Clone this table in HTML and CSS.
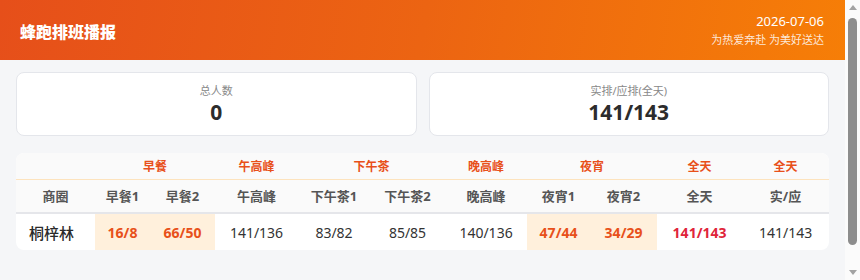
FILE: index.html
```html
<!DOCTYPE html>
<html lang="zh-CN">
<head>
<meta charset="utf-8">
<title>蜂跑排班播报</title>
<link rel="stylesheet" href="styles.css">
</head>
<body>
<div class="page">
<header class="topbar">
  <h1 class="title">蜂跑排班播报</h1>
  <div class="meta">
    <div class="date">2026-07-06</div>
    <div class="slogan">为热爱奔赴 为美好送达</div>
  </div>
</header>
<main class="main">
  <section class="stats">
    <div class="stat">
      <div class="stat-label">总人数</div>
      <div class="stat-value">0</div>
    </div>
    <div class="stat">
      <div class="stat-label">实排/应排(全天)</div>
      <div class="stat-value">141/143</div>
    </div>
  </section>
  <section class="table-card">
    <table class="grid">
      <colgroup>
        <col class="c-name"><col class="c-b1"><col class="c-b2"><col class="c-noon">
        <col class="c-t1"><col class="c-t2"><col class="c-eve"><col class="c-n1">
        <col class="c-n2"><col class="c-all"><col class="c-ratio">
      </colgroup>
      <thead>
        <tr class="group-row">
          <th></th>
          <th colspan="2">早餐</th>
          <th>午高峰</th>
          <th colspan="2">下午茶</th>
          <th>晚高峰</th>
          <th colspan="2">夜宵</th>
          <th>全天</th>
          <th>全天</th>
        </tr>
        <tr class="head-row">
          <th>商圈</th>
          <th>早餐1</th>
          <th>早餐2</th>
          <th>午高峰</th>
          <th>下午茶1</th>
          <th>下午茶2</th>
          <th>晚高峰</th>
          <th>夜宵1</th>
          <th>夜宵2</th>
          <th>全天</th>
          <th>实/应</th>
        </tr>
      </thead>
      <tbody>
        <tr class="data-row">
          <td class="name">桐梓林</td>
          <td class="hl warn">16/8</td>
          <td class="hl warn">66/50</td>
          <td>141/136</td>
          <td>83/82</td>
          <td>85/85</td>
          <td>140/136</td>
          <td class="hl warn">47/44</td>
          <td class="hl warn">34/29</td>
          <td class="danger">141/143</td>
          <td>141/143</td>
        </tr>
      </tbody>
    </table>
  </section>
  <footer class="foot">数据仅供参考 以实际为准</footer>
</main>
</div>
<div class="scrollbar" aria-hidden="true">
  <div class="sb-btn"><span class="tri-up"></span></div>
  <div class="sb-track"><div class="sb-thumb"></div></div>
  <div class="sb-btn"><span class="tri-down"></span></div>
</div>
</body>
</html>
```
FILE: styles.css
```css
* { box-sizing: border-box; }
body {
  margin: 0;
  background: #f5f6f8;
  font-family: "Noto Sans", "Noto Sans CJK SC", sans-serif;
  color: #333;
}
.page { margin-right: 15px; }
.scrollbar {
  position: fixed;
  top: 0;
  right: 0;
  width: 15px;
  height: 100vh;
  background: #fbfbfb;
  display: flex;
  flex-direction: column;
}
.sb-btn {
  height: 15px;
  display: flex;
  align-items: center;
  justify-content: center;
}
.tri-up, .tri-down {
  width: 0;
  height: 0;
  border-left: 4px solid transparent;
  border-right: 4px solid transparent;
}
.tri-up { border-bottom: 5px solid #a3a3a3; margin-top: 0; }
.tri-down { border-top: 5px solid #a3a3a3; margin-top: 0; }
.sb-track { flex: 1; padding: 3px 3px 0; }
.sb-thumb {
  height: 227px;
  background: #8d8d8d;
  border-radius: 5px;
}
.topbar {
  height: 60px;
  background: linear-gradient(100deg, #e64f1a 0%, #ec6412 50%, #f67e07 100%);
  display: flex;
  align-items: center;
  justify-content: space-between;
  padding: 0 21px 0 20px;
  color: #fff;
}
.title {
  margin: 0;
  font-size: 16px;
  font-weight: 900;
  font-family: "Noto Sans CJK SC", sans-serif;
  position: relative;
  top: 1px;
}
.meta { text-align: right; line-height: 1; }
.date { font-size: 13px; color: #fff; }
.slogan { font-size: 11px; color: rgba(255,255,255,0.85); margin-top: 6px; }
.main { padding: 12px 16px 0; }
.stats {
  display: grid;
  grid-template-columns: 1fr 1fr;
  gap: 12px;
}
.stat {
  height: 64px;
  background: #fff;
  border: 1px solid #e4e6eb;
  border-radius: 8px;
  display: flex;
  flex-direction: column;
  align-items: center;
  justify-content: center;
}
.stat-label { font-size: 11px; color: #888; line-height: 14px; margin-top: 1px; }
.stat-value { font-size: 21px; font-weight: 700; color: #2c2c2c; line-height: 28px; }
.table-card {
  margin-top: 17px;
  background: #fff;
  border-radius: 8px;
  overflow: hidden;
}
.grid {
  width: 100%;
  border-collapse: collapse;
  table-layout: fixed;
}
.c-name { width: 79px; }
.c-b1 { width: 55px; }
.c-b2 { width: 65px; }
.c-noon { width: 83px; }
.c-t1 { width: 72px; }
.c-t2 { width: 75px; }
.c-eve { width: 82px; }
.c-n1 { width: 63px; }
.c-n2 { width: 67px; }
.c-all { width: 85px; }
.c-ratio { width: 87px; }
.grid th, .grid td { padding: 0; text-align: center; white-space: nowrap; }
.group-row th {
  height: 26px;
  background: #fafafa;
  color: #e8501a;
  font-size: 12px;
  font-weight: 700;
  border-bottom: 1px solid #fde3bd;
}
.head-row th {
  height: 34px;
  background: #fafafa;
  color: #555;
  font-size: 13px;
  font-weight: 700;
  border-bottom: 2px solid #e5e6ea;
}
.data-row td {
  height: 37px;
  font-size: 14px;
  color: #333;
}
.data-row td.name {
  text-align: left;
  padding-left: 13px;
  font-size: 15px;
  font-weight: 500;
  color: #2a2a2a;
}
.data-row td.hl { background: #fff0dc; }
.data-row td.warn { color: #e8501a; font-weight: 700; }
.data-row td.danger { color: #e0243a; font-weight: 700; }
.foot {
  margin-top: 30px;
  padding-bottom: 12px;
  text-align: center;
  font-size: 11px;
  color: #aaa;
  line-height: 16px;
}
```
